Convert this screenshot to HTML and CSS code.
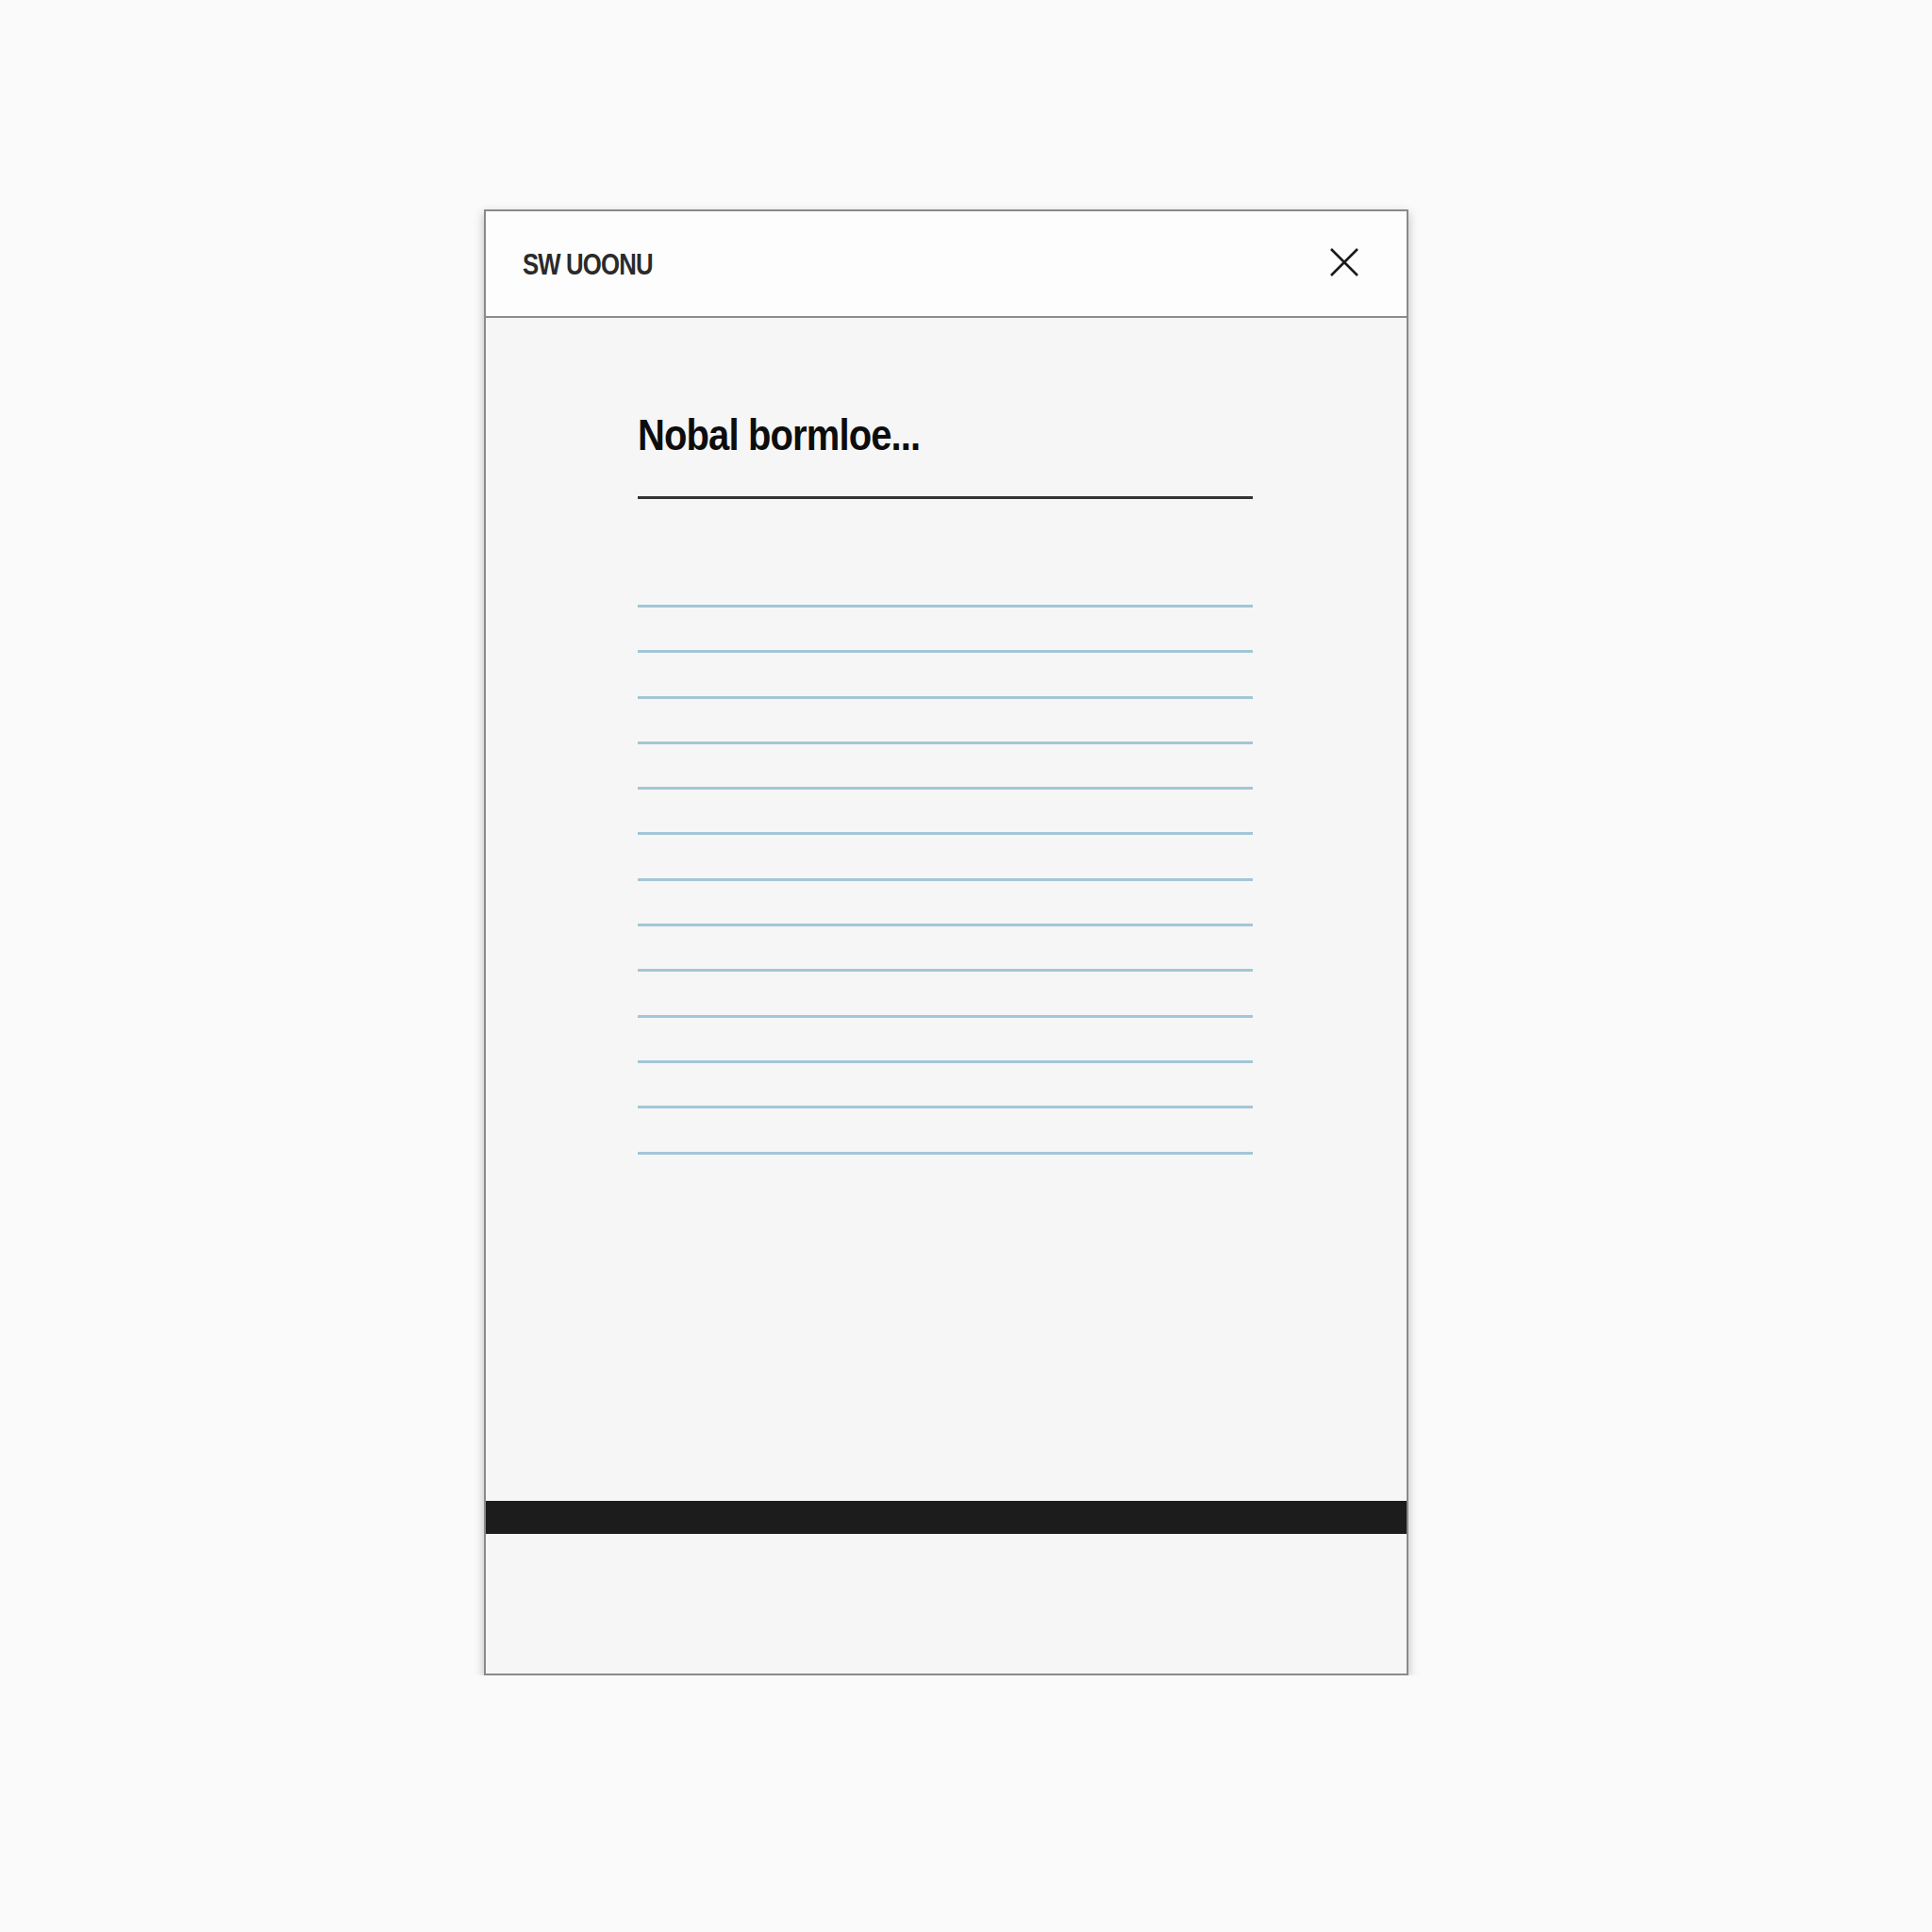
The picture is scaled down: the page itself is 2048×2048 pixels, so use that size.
FILE: index.html
```html
<!DOCTYPE html>
<html lang="en">
<head>
<meta charset="UTF-8" />
<title>Notebook</title>
<link rel="stylesheet" href="styles.css">
</head>
<body>

<div class="sheet">
    <div class="sheet-head">
        <span class="sheet-title">SW UOONU</span>
        <button class="close" aria-label="Close">
            <svg width="32" height="32" viewBox="0 0 32 32">
                <path d="M2 2 L30 30 M30 2 L2 30" stroke="#1a1a1a" stroke-width="2.6" fill="none" />
            </svg>
        </button>
    </div>
    <div class="sheet-body">
        <h1 class="note-title">Nobal bormloe...</h1>
        <div class="note-rule"></div>
        <div class="lines">
            <div class="line"></div>
            <div class="line"></div>
            <div class="line"></div>
            <div class="line"></div>
            <div class="line"></div>
            <div class="line"></div>
            <div class="line"></div>
            <div class="line"></div>
            <div class="line"></div>
            <div class="line"></div>
            <div class="line"></div>
            <div class="line"></div>
            <div class="line"></div>
        </div>
    </div>
    <div class="sheet-band"></div>
    <div class="sheet-foot"></div>
</div>

</body>
</html>
```

FILE: styles.css
```css
body {
    font-family: "Liberation Sans", Arial, sans-serif;
    background: #fafafa;
    margin: 0;
    padding: 222px 0 0 513px;
}
.sheet {
    width: 976px;
    background: #f6f6f6;
    border: 2px solid #8a8a8a;
    box-shadow: 0 4px 10px rgba(0,0,0,0.25);
    display: flex;
    flex-direction: column;
}
.sheet-head {
    height: 111px;
    background: #fdfdfd;
    border-bottom: 2px solid #8c8c8c;
    display: flex;
    align-items: center;
    justify-content: space-between;
    padding: 0 50px 0 39px;
}
.sheet-title {
    font-size: 31px;
    font-weight: bold;
    color: #2a2a2a;
    letter-spacing: -1px;
    transform: scaleX(0.83);
    transform-origin: left center;
    margin-top: 2px;
}
.close {
    background: none;
    border: none;
    padding: 0;
    width: 32px;
    height: 32px;
    margin-top: -4px;
}
.close svg {
    display: block;
}
.sheet-body {
    height: 1254px;
    padding: 0 163px 0 161px;
}
.note-title {
    margin: 100px 0 0;
    font-size: 47px;
    line-height: 48px;
    font-weight: bold;
    color: #0d0d0d;
    letter-spacing: -1px;
    white-space: nowrap;
    transform: scaleX(0.85);
    transform-origin: left center;
}
.note-rule {
    height: 3px;
    background: #333;
    margin-top: 41px;
}
.lines {
    margin-top: 112px;
    display: flex;
    flex-direction: column;
    gap: 45.3px;
}
.line {
    height: 3px;
    background: #a3c6d6;
}
.sheet-band {
    height: 35px;
    background: #1c1c1c;
}
.sheet-foot {
    height: 148px;
}
```
